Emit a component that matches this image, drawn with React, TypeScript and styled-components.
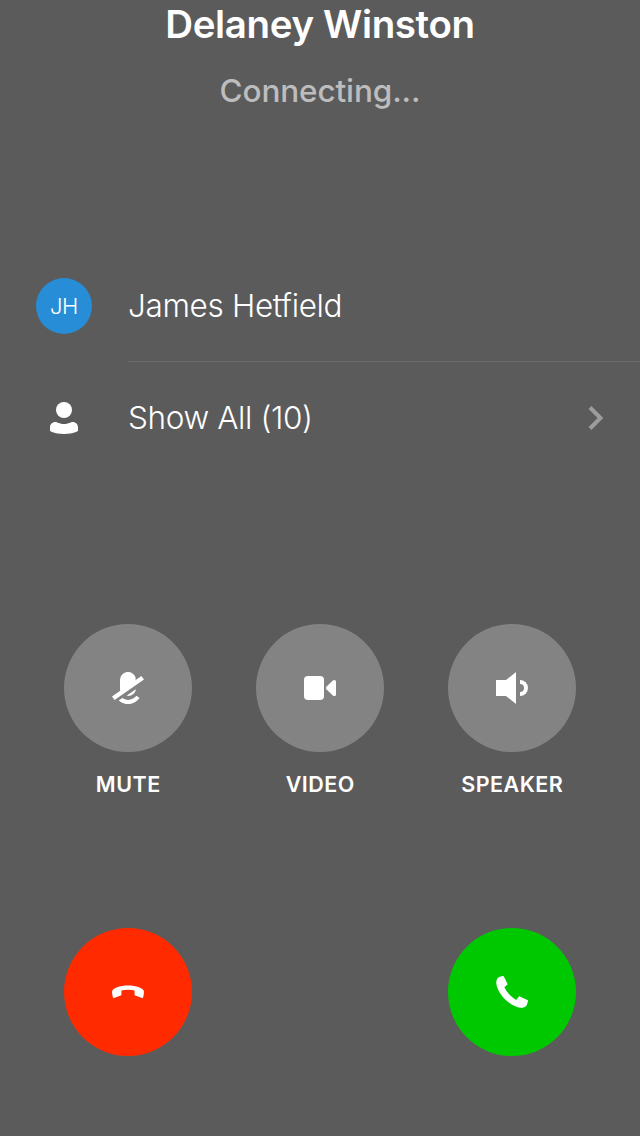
import React from 'react';
import styled, { createGlobalStyle } from 'styled-components';

const GlobalStyle = createGlobalStyle`
  *, *::before, *::after { box-sizing: border-box; }
  body { margin: 0; background: #5b5b5b; }
  button { border: 0; padding: 0; margin: 0; font: inherit; color: inherit; cursor: pointer; }
  svg { display: block; }
`;

const Screen = styled.main`
  display: flex;
  flex-direction: column;
  width: 640px;
  height: 1136px;
  overflow: hidden;
  background: #5b5b5b;
  color: #fff;
  font-family: Inter, "Liberation Sans", sans-serif;
`;

const Header = styled.header`
  display: flex;
  flex-direction: column;
  align-items: center;
  height: 250px;
`;

const CallerName = styled.h1`
  margin: 0;
  font-size: 38.5px;
  line-height: 48px;
  font-weight: 600;
  letter-spacing: -0.37px;
  white-space: nowrap;
`;

const CallStatus = styled.p`
  margin: 23px 0 0;
  color: #bdbdbd;
  font-size: 31.5px;
  line-height: 40px;
  font-weight: 500;
  letter-spacing: -0.12px;
  white-space: nowrap;
`;

const Participants = styled.section`
  display: flex;
  flex-direction: column;
  height: 374px;
`;

const Row = styled.div`
  display: grid;
  grid-template-columns: 128px 1fr;
  height: 112px;
`;

const Leading = styled.div`
  display: flex;
  align-items: center;
  justify-content: center;
`;

const Avatar = styled.div`
  display: flex;
  align-items: center;
  justify-content: center;
  width: 56px;
  height: 56px;
  border-radius: 50%;
  background: #268dd6;
  font-size: 22px;
  font-weight: 300;
  line-height: 28px;
  letter-spacing: -0.5px;
`;

const RowBody = styled.div<{ $divided?: boolean }>`
  display: flex;
  align-items: center;
  justify-content: space-between;
  padding-right: 36px;
  box-shadow: ${({ $divided }) => ($divided ? 'inset 0 -1px #6c6c6c' : 'none')};
`;

const RowLabel = styled.span<{ $spacing: string }>`
  font-size: 31.5px;
  line-height: 40px;
  font-weight: 300;
  font-feature-settings: "calt" 0;
  letter-spacing: ${({ $spacing }) => $spacing};
  white-space: nowrap;
`;

const Controls = styled.div`
  display: grid;
  grid-template-columns: repeat(3, 128px);
  justify-content: space-between;
  height: 304px;
  padding: 0 64px;
`;

const Control = styled.div`
  display: flex;
  flex-direction: column;
  align-items: center;
`;

const RoundButton = styled.button<{ $color: string }>`
  display: flex;
  align-items: center;
  justify-content: center;
  width: 128px;
  height: 128px;
  border-radius: 50%;
  background: ${({ $color }) => $color};
`;

const ControlLabel = styled.span`
  margin-top: 18px;
  padding-left: 0.5px;
  font-size: 21.5px;
  line-height: 28px;
  font-weight: 600;
  letter-spacing: 0.5px;
  white-space: nowrap;
`;

const CallActions = styled.div`
  display: flex;
  justify-content: space-between;
  padding: 0 64px;
`;

const Icon = ({ children }: { children: React.ReactNode }) => (
  <svg width="32" height="32" viewBox="0 0 32 32" fill="#fff" aria-hidden="true">
    {children}
  </svg>
);

const PersonIcon = () => (
  <Icon>
    <circle cx="16" cy="8" r="8" />
    <path d="M2 25.5C2 22.3 4.3 20 7.2 20C9.5 20 11.4 22 16 22C20.6 22 22.5 20 24.8 20C27.7 20 30 22.3 30 25.5V29C27 31 21.5 32 16 32C10.5 32 5 31 2 29Z" />
  </Icon>
);

const MuteIcon = () => (
  <Icon>
    <path d="M8 8A8 8 0 0 1 23.600 5.500V10L8 21Z" />
    <path d="M0 24.600L29.400 4L32 7.400L2.500 28Z" />
    <path d="M14.600 23.800L23.900 17.200C23.300 21.500 19 24.700 14.600 23.800Z" />
    <path d="M6.700 28.600L10.400 26C15.400 29.200 20.500 28.200 24.500 23.800L27.600 26.100C22.300 33.500 12.800 33.800 6.700 28.600Z" />
  </Icon>
);

const VideoIcon = () => (
  <Icon>
    <rect y="4" width="20" height="24" rx="4" />
    <path d="M22.400 14.800L28.800 8.600Q29.600 8 30.500 8Q32 8 32 9.600V22.400Q32 24 30.500 24Q29.600 24 28.800 23.400L22.400 17.200Q21.300 16 22.400 14.800Z" />
  </Icon>
);

const SpeakerIcon = () => (
  <Icon>
    <path d="M0 8H10L20 0V32L10 24H0Z" />
    <path d="M24 8A8 8 0 0 1 24 24V20A4 4 0 0 0 24 12Z" />
  </Icon>
);

const HangUpIcon = () => (
  <Icon>
    <path d="M0 16C0 12 8 9.500 16 9.500C24 9.500 32 12 32 16C32 18 31.500 20 30.800 22.200L22.600 19.200V14.600C18.500 13.600 13.500 13.600 9.400 14.600V19.200L1.200 22.200C.5 20 0 18 0 16Z" />
  </Icon>
);

const PhoneIcon = () => (
  <Icon>
    <path d="M2 1.800C3.700 .8 5.300 .2 7.600 0L11.700 8.300L8.400 11.300C10.500 16 15.200 21 20.200 23.900L23.200 20.300L32 24.300C31.800 26.500 31.200 28.300 30.200 30C26.800 33.700 18.500 31.600 10.300 24.600C2.200 17.300-2.500 6.300 2 1.800Z" />
  </Icon>
);

const ChevronIcon = () => (
  <svg width="16" height="24" viewBox="0 0 16 24" fill="none" stroke="#9c9c9c" strokeWidth="4" aria-hidden="true">
    <path d="M2 1.500L12.500 12L2 22.500" />
  </svg>
);

export default function App() {
  return (
    <>
      <GlobalStyle />
      <Screen>
        <Header>
          <CallerName>Delaney Winston</CallerName>
          <CallStatus>Connecting...</CallStatus>
        </Header>
        <Participants>
          <Row>
            <Leading><Avatar>JH</Avatar></Leading>
            <RowBody $divided><RowLabel $spacing="-0.35px">James Hetfield</RowLabel></RowBody>
          </Row>
          <Row>
            <Leading><PersonIcon /></Leading>
            <RowBody>
              <RowLabel $spacing="-0.38px">Show All (10)</RowLabel>
              <ChevronIcon />
            </RowBody>
          </Row>
        </Participants>
        <Controls>
          <Control>
            <RoundButton $color="#838383" aria-label="Mute"><MuteIcon /></RoundButton>
            <ControlLabel>MUTE</ControlLabel>
          </Control>
          <Control>
            <RoundButton $color="#838383" aria-label="Video"><VideoIcon /></RoundButton>
            <ControlLabel>VIDEO</ControlLabel>
          </Control>
          <Control>
            <RoundButton $color="#838383" aria-label="Speaker"><SpeakerIcon /></RoundButton>
            <ControlLabel>SPEAKER</ControlLabel>
          </Control>
        </Controls>
        <CallActions>
          <RoundButton $color="#ff2a00" aria-label="Decline"><HangUpIcon /></RoundButton>
          <RoundButton $color="#00c800" aria-label="Accept"><PhoneIcon /></RoundButton>
        </CallActions>
      </Screen>
    </>
  );
}
